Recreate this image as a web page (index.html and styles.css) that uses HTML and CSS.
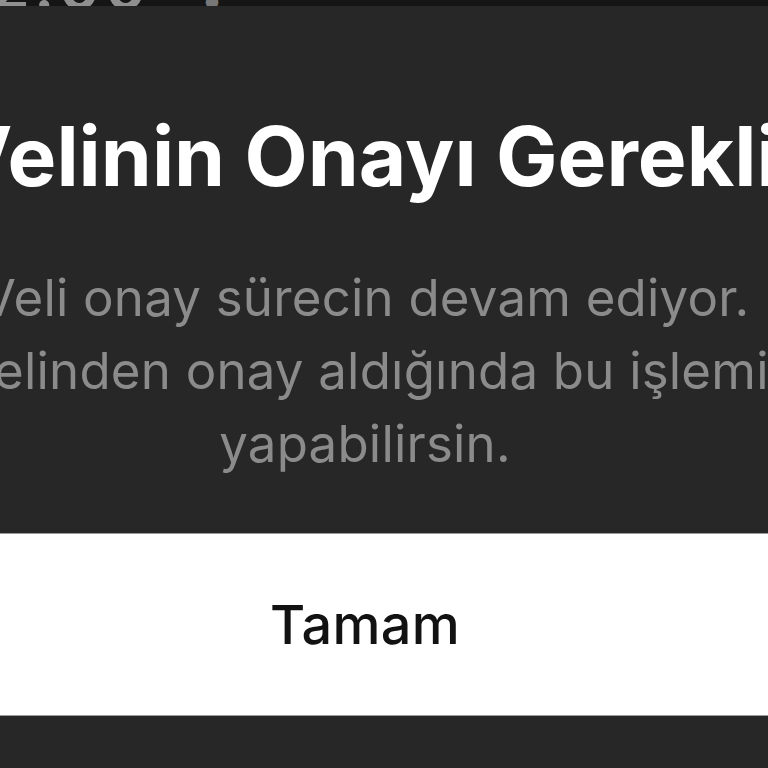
FILE: index.html
```html
<!DOCTYPE html>
<html lang="tr">
<head>
<meta charset="utf-8">
<title>Velinin Onayı Gerekli</title>
<link rel="stylesheet" href="styles.css">
</head>
<body>
<div class="screen">
  <div class="statusbar"><span class="status-time">2:00</span><span class="status-dot">•</span></div>
  <div class="dialog">
    <h1 class="title">Velinin Onayı Gerekli</h1>
    <p class="message">Veli onay sürecin devam ediyor. Velinden onay aldığında bu işlemi yapabilirsin.</p>
    <button class="ok-button" type="button">Tamam</button>
  </div>
</div>
</body>
</html>
```
FILE: styles.css
```css
html, body {
  margin: 0;
  padding: 0;
  background: #272727;
}
body {
  width: 768px;
  height: 768px;
  overflow: hidden;
  font-family: Inter, "Noto Sans", sans-serif;
}
.screen {
  display: flex;
  flex-direction: column;
  height: 768px;
}
.statusbar {
  height: 6px;
  background: #151515;
  overflow: hidden;
  display: flex;
  align-items: flex-end;
  gap: 50px;
}
.status-time {
  font-size: 64px;
  line-height: 1;
  color: #8f8f8f;
  font-weight: 600;
  margin-bottom: -12px;
  margin-left: -10px;
  letter-spacing: 4px;
}
.status-dot {
  font-size: 40px;
  color: #777777;
  line-height: 1;
  margin-bottom: -14px;
}
.dialog {
  display: flex;
  flex-direction: column;
  align-items: center;
  width: 888px;
  margin-left: -79px;
}
.title {
  margin: 101px 0 0;
  font-size: 82px;
  line-height: 100px;
  font-weight: 700;
  color: #ffffff;
  white-space: nowrap;
  letter-spacing: 0;
  text-align: center;
}
.message {
  margin: 54px 0 0;
  font-size: 51px;
  line-height: 73px;
  font-weight: 400;
  letter-spacing: 0.2px;
  color: #8b8b8b;
  text-align: center;
  width: 850px;
}
.ok-button {
  margin-top: 53px;
  align-self: stretch;
  height: 183px;
  background: #ffffff;
  border: none;
  border-top: 1px solid #9a9a9a;
  border-bottom: 1px solid #9a9a9a;
  font-family: Inter, "Noto Sans", sans-serif;
  font-size: 54px;
  font-weight: 500;
  letter-spacing: 0.3px;
  color: #121212;
  padding: 0;
}
```
